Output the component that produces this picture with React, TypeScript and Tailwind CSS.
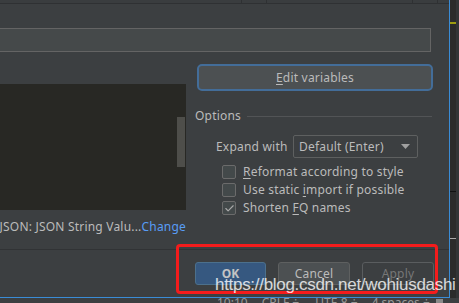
import { Check } from "lucide-react";

const ui = { fontFamily: '"Noto Sans", "Open Sans", sans-serif' };

// small checkbox row used in the options block
function OptionRow({ checked, children }: { checked?: boolean; children: React.ReactNode }) {
  return (
    <div className="flex items-center h-[18px] pl-[27px] gap-[7px]">
      <div className="w-[14px] h-[14px] rounded-[2px] border border-[#6b6b6b] bg-[#43494a] flex items-center justify-center">
        {checked && <Check size={11} strokeWidth={2.5} className="text-[#a9a9a9]" />}
      </div>
      <span className="text-[12px] leading-[16px] tracking-[0.2px] text-[#bbbbbb] whitespace-nowrap">{children}</span>
    </div>
  );
}

export default function App() {
  return (
    <div className="w-[459px] h-[303px] bg-[#3c3f41] overflow-hidden relative flex flex-col" style={ui}>
      <div className="flex h-[298px]">
        {/* dialog */}
        <div className="w-[450px] h-[298px] border-r border-b border-[#3a8cd6] flex flex-col">
          {/* table stub at the top */}
          <div className="h-[4px] flex border-b border-[#2f3133] bg-[#3a3d3f]">
            <div className="w-[242px] border-r border-[#2f3133]" />
            <div className="w-[25px] border-r border-[#2f3133]" />
            <div className="w-[146px] border-r border-[#2f3133]" />
            <div className="w-[25px] border-r border-[#2f3133]" />
          </div>

          {/* description field */}
          <div className="mt-[24px] mr-[18px] ml-[-1px] h-[24px] bg-[#45494a] border border-[#646464]" />

          <div className="flex h-[197px]">
            {/* template text + context */}
            <div className="w-[186px] flex flex-col">
              <div className="mt-[32px] h-[126px] bg-[#282824] flex justify-end">
                <div className="mt-[33px] mr-[1px] w-[8px] h-[50px] bg-[#4e4e4a]" />
              </div>
              <div className="mt-[9px] h-[16px] flex justify-end overflow-hidden whitespace-nowrap text-[12px] leading-[16px] tracking-[0.2px]">
                <span className="text-[#bbbbbb]">Applicable in JSON: JSON String Valu...</span>
                <span className="text-[#589df6]">Change</span>
              </div>
            </div>

            {/* right column */}
            <div className="ml-[9px] w-[238px] flex flex-col">
              <div className="mt-[12px] ml-[2px] h-[27px] rounded-[5px] border-[2px] border-[#436d99] bg-[#4c5052] flex items-center justify-center text-[12px] tracking-[0.2px] text-[#bbbbbb]">
                <span>
                  <u className="underline-offset-2">E</u>dit variables
                </span>
              </div>

              <div className="mt-[17px] flex items-center h-[16px] mr-[1px]">
                <span className="text-[12px] leading-[16px] tracking-[0.2px] text-[#bbbbbb]">Options</span>
                <div className="flex-1 ml-[6px] h-px bg-[#525456]" />
              </div>

              <div className="mt-[11px] flex items-center pl-[21px]">
                <span className="w-[77px] text-[12px] tracking-[0.2px] text-[#bbbbbb] whitespace-nowrap">Expand with</span>
                <div className="w-[125px] h-[23px] border border-[#5e6060] rounded-[2px] bg-[#3c3f41] flex items-center pl-[5px] pr-[7px]">
                  <span className="flex-1 text-[12px] tracking-[0.2px] text-[#bbbbbb] whitespace-nowrap">Default (Enter)</span>
                  <svg width="9" height="5" viewBox="0 0 9 5">
                    <path d="M0 0 L9 0 L4.5 5 Z" fill="#a0a0a0" />
                  </svg>
                </div>
              </div>

              <div className="mt-[5px] flex flex-col">
                <OptionRow>
                  <u className="underline-offset-2">R</u>eformat according to style
                </OptionRow>
                <OptionRow>
                  Use static <u className="underline-offset-2">i</u>mport if possible
                </OptionRow>
                <OptionRow checked>
                  Shorten <u className="underline-offset-2">F</u>Q names
                </OptionRow>
              </div>
            </div>
          </div>

          <div className="h-px bg-[#313335]" />

          {/* dialog buttons */}
          <div className="mt-[12px] flex justify-end gap-[12px] pr-[15px]">
            <div className="w-[71px] h-[23px] rounded-[3px] border border-[#4c708c] bg-[#365880] flex items-center justify-center text-[12px] font-bold text-[#c4c4c4]">
              OK
            </div>
            <div className="w-[72px] h-[23px] rounded-[3px] border border-[#5e6060] bg-[#4c5052] flex items-center justify-center text-[12px] tracking-[0.2px] text-[#bbbbbb]">
              Cancel
            </div>
            <div className="w-[72px] h-[23px] rounded-[3px] border border-[#5a5d5f] bg-[#3c3f41] flex items-center justify-center text-[12px] tracking-[0.2px] text-[#777777]">
              Apply
            </div>
          </div>
        </div>

        {/* editor gutter strip on the right */}
        <div className="flex-1 flex">
          <div className="w-[6px] bg-[#2b2b2b] flex flex-col">
            <div className="mt-[22px] h-[2px] bg-[#9e9c10]" />
            <div className="mt-[167px] h-px bg-[#111111]" />
            <div className="mt-[46px] h-px bg-[#a9a9a9]" />
          </div>
          <div className="flex-1 bg-[#333537]" />
        </div>
      </div>

      {/* status bar, mostly cut off */}
      <div className="h-[5px] overflow-hidden flex items-start text-[12px] leading-[16px] text-[#9a9a9a] whitespace-nowrap">
        <div className="mt-[-3px] ml-[217px] flex">
          <span>10:10</span>
          <span className="ml-[14px]">CRLF ÷</span>
          <span className="ml-[16px]">UTF-8 ÷</span>
          <span className="ml-[14px]">4 spaces ÷</span>
        </div>
        <div className="ml-auto mr-[16px] mt-[1px] w-[7px] h-[5px] bg-[#8a8a8a]" />
      </div>

      {/* red annotation box */}
      <div className="absolute left-[176px] top-[244px] w-[262px] h-[50px] border-[3px] border-[#f41c1c] rounded-[4px]" />

      {/* blog watermark */}
      <div
        className="absolute left-[215px] top-[276px] text-[17px] leading-[17px] tracking-[-0.3px] text-white/80 whitespace-nowrap"
        style={{ fontFamily: '"Liberation Sans", Arial, sans-serif' }}
      >
        https://blog.csdn.net/wohiusdashi
      </div>
    </div>
  );
}
